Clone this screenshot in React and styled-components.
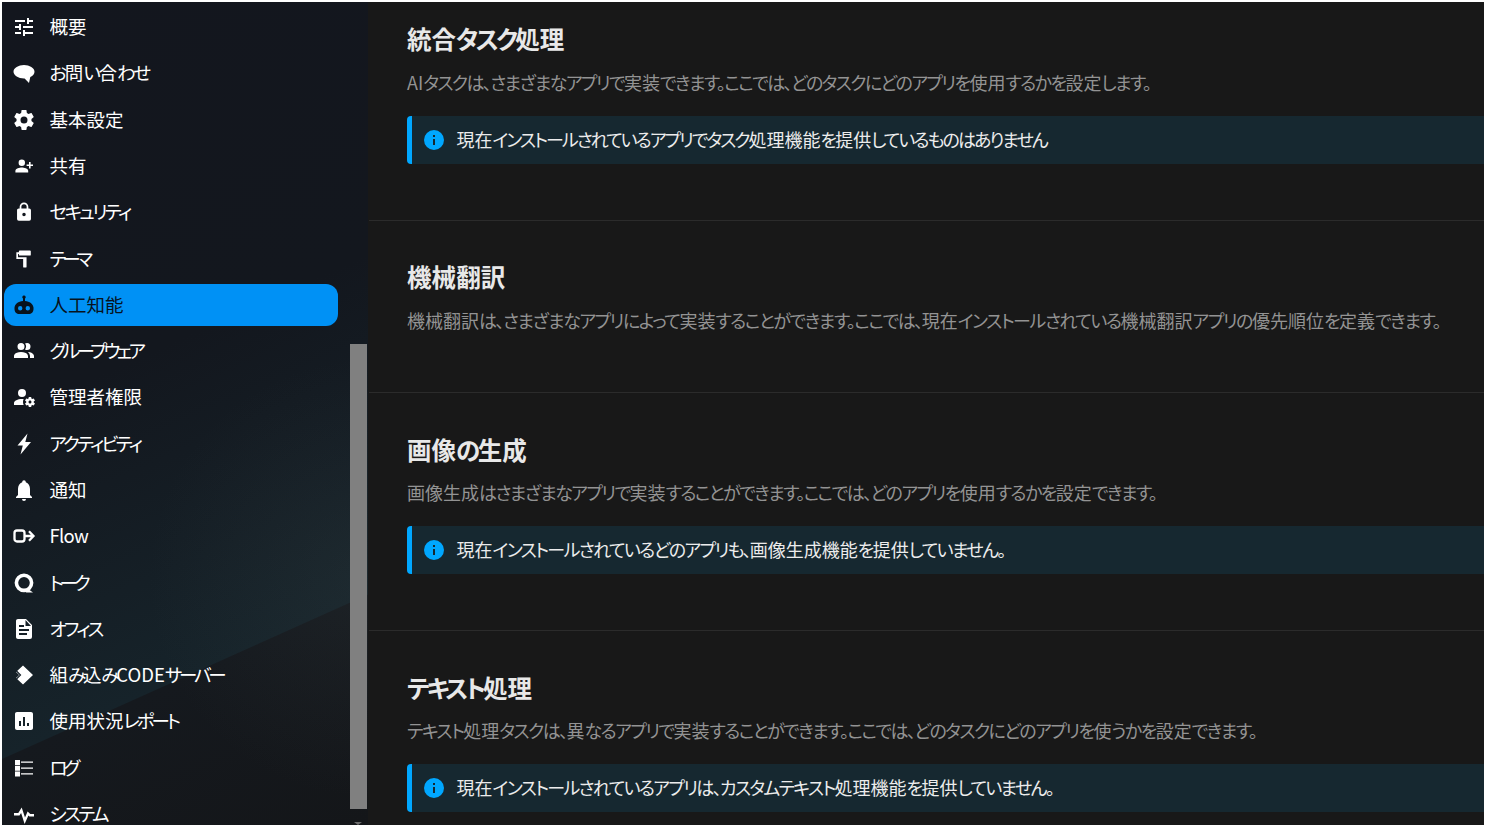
import styled, { createGlobalStyle } from "styled-components";

const GlobalStyle = createGlobalStyle`
  html, body {
    margin: 0;
    height: 100%;
    background: #fff;
    overflow: hidden;
  }
  body {
    font-family: "Noto Sans CJK JP", "Noto Sans", sans-serif;
    font-feature-settings: "palt";
  }
`;

const Frame = styled.div`
  display: flex;
  height: 100vh;
  box-sizing: border-box;
  padding: 2px;
  overflow: hidden;
`;

const Sidebar = styled.aside`
  position: relative;
  flex: 0 0 366px;
  overflow: hidden;
  background:
    radial-gradient(circle at 100% 70%, rgba(70, 80, 80, 0.16), transparent 220px),
    linear-gradient(
      155.8deg,
      #13161e 0,
      #13171e 380px,
      #16232a 690px,
      #15191e 691px,
      #141619 900px
    );
`;

const NavList = styled.ul`
  list-style: none;
  margin: 0;
  padding: 4px 0 0 2px;
  width: 334px;
`;

const NavItem = styled.li`
  display: flex;
  align-items: center;
  gap: 13.5px;
  box-sizing: border-box;
  height: 42.29px;
  margin-bottom: 4px;
  padding-left: 8px;
  border-radius: 12px;
  font-size: 18.5px;
  white-space: nowrap;
  color: ${(p) => (p.$active ? "#07131d" : "#fff")};
  background: ${(p) => (p.$active ? "#0091f5" : "transparent")};
`;

const Label = styled.span`
  margin-top: -2px;
`;

const Tight = styled.span`
  letter-spacing: ${(p) => p.$spacing}px;
`;

const Icon = styled.svg`
  flex: none;
  width: 24px;
  height: 24px;
  fill: currentColor;
`;

const ScrollThumb = styled.div`
  position: absolute;
  top: 342px;
  left: 348px;
  width: 17px;
  height: 465px;
  background: #808080;
`;

const ScrollArrow = styled.div`
  position: absolute;
  bottom: 0;
  left: 352px;
  width: 0;
  height: 0;
  border-left: 4px solid transparent;
  border-right: 4px solid transparent;
  border-top: 3px solid #6d6d6d;
`;

const Main = styled.main`
  flex: 1;
  min-width: 0;
  overflow: hidden;
  background: #181818;
`;

const Section = styled.section`
  padding: ${(p) => (p.$first ? "22px" : "41.5px")} 0 56px 38px;
  margin-left: 1px;
  border-bottom: 1px solid #2b2b2b;
`;

const Heading = styled.h2`
  margin: 0;
  font-size: 24.5px;
  line-height: 30px;
  font-weight: 700;
  color: #e8e8e8;
`;

const Description = styled.p`
  margin: 15.5px 0 4.5px;
  font-size: 18px;
  line-height: 24px;
  white-space: nowrap;
  color: #939393;
`;

const Note = styled.div`
  display: flex;
  align-items: center;
  gap: 10.5px;
  box-sizing: border-box;
  height: 48px;
  margin-top: 22px;
  padding-left: 10px;
  border-left: 5px solid #00a7ff;
  border-radius: 4px 0 0 4px;
  background: #162830;
  font-size: 18px;
  white-space: nowrap;
  color: #ececec;
`;

const InfoIcon = styled(Icon)`
  color: #00a7ff;
`;

// the kana in the reference's font are narrow and the kanji are full width,
// so only the kana runs get tightened; squeeze is the average per character
const KANA = /([\u3040-\u30ff、。]+)/;

const Squeezed = ({ text, squeeze = 0 }) => {
  const parts = text.split(KANA);
  const kanaCount = parts.filter((part) => KANA.test(part)).join("").length;
  if (kanaCount === 0) return <Tight $spacing={squeeze}>{text}</Tight>;
  const spacing = (squeeze * text.length) / kanaCount;
  return parts.map((part, index) =>
    KANA.test(part) ? <Tight key={index} $spacing={spacing}>{part}</Tight> : part
  );
};

const icons = {
  tune: <path d="M3,17V19H9V17H3M3,5V7H13V5H3M13,21V19H21V17H13V15H11V21H13M7,9V11H3V13H7V15H9V9H7M21,13V11H11V13H21M15,9H17V7H21V5H17V3H15V9Z" />,
  chat: <path d="M12 4C6.500 4 1.500 7 1.500 10.700c0 3.700 5 6.700 10.500 6.700h.6L17 22l1.300-6.100c2.700-1.200 4.200-3.100 4.200-5.200C22.500 7 17.500 4 12 4z" />,
  cog: <path d="M12,15.500A3.500,3.500 0 0,1 8.500,12A3.500,3.500 0 0,1 12,8.500A3.500,3.500 0 0,1 15.500,12A3.500,3.500 0 0,1 12,15.500M19.430,12.970C19.470,12.650 19.500,12.330 19.500,12C19.500,11.670 19.470,11.340 19.430,11L21.540,9.370C21.730,9.220 21.780,8.950 21.660,8.730L19.660,5.270C19.540,5.050 19.270,4.960 19.050,5.050L16.560,6.050C16.040,5.660 15.500,5.320 14.870,5.070L14.500,2.420C14.460,2.180 14.250,2 14,2H10C9.750,2 9.540,2.180 9.500,2.420L9.130,5.070C8.500,5.320 7.960,5.660 7.440,6.050L4.950,5.050C4.730,4.960 4.460,5.050 4.340,5.270L2.340,8.730C2.210,8.950 2.270,9.220 2.460,9.370L4.570,11C4.530,11.340 4.500,11.670 4.500,12C4.500,12.330 4.530,12.650 4.570,12.970L2.460,14.630C2.270,14.780 2.210,15.050 2.340,15.270L4.340,18.730C4.460,18.950 4.730,19.030 4.950,18.950L7.440,17.940C7.960,18.340 8.500,18.680 9.130,18.930L9.500,21.580C9.540,21.820 9.750,22 10,22H14C14.250,22 14.460,21.820 14.500,21.580L14.870,18.930C15.500,18.670 16.040,18.340 16.560,17.940L19.050,18.950C19.270,19.030 19.540,18.950 19.660,18.730L21.660,15.270C21.780,15.050 21.730,14.780 21.540,14.630L19.430,12.970Z" />,
  share: <path transform="matrix(-0.8 0 0 0.8 21.800 2.400)" d="M15,14C12.330,14 7,15.330 7,18V20H23V18C23,15.330 17.670,14 15,14M6,10V7H4V10H1V12H4V15H6V12H9V10M15,12A4,4 0 0,0 19,8A4,4 0 0,0 15,4A4,4 0 0,0 11,8A4,4 0 0,0 15,12Z" />,
  lock: <path transform="matrix(0.87 0 0 0.87 1.560 1.560)" d="M12,17A2,2 0 0,0 14,15C14,13.890 13.100,13 12,13A2,2 0 0,0 10,15A2,2 0 0,0 12,17M18,8A2,2 0 0,1 20,10V20A2,2 0 0,1 18,22H6A2,2 0 0,1 4,20V10C4,8.890 4.900,8 6,8H7V6A5,5 0 0,1 12,1A5,5 0 0,1 17,6V8H18M12,3A3,3 0 0,0 9,6V8H15V6A3,3 0 0,0 12,3Z" />,
  paint: <path transform="matrix(-0.85 0 0 0.85 22.200 1.800)" d="M18,4V3A1,1 0 0,0 17,2H5A1,1 0 0,0 4,3V7A1,1 0 0,0 5,8H17A1,1 0 0,0 18,7V6H19V10H9V21A1,1 0 0,0 10,22H12A1,1 0 0,0 13,21V12H21V4H18Z" />,
  robot: <path fillRule="evenodd" d="M12 2.500a1.700 1.700 0 0 1 1 3.100V8c4.800.4 8 3 8.500 6.500v1.500c0 3-2 5-5 5h-9c-3 0-5-2-5-5v-1.500C3 11 6.200 8.400 11 8V5.600a1.700 1.700 0 0 1 1-3.100zM8.200 13a2.200 2.200 0 1 0 0 4.400 2.200 2.200 0 0 0 0-4.400zm7.600 0a2.200 2.200 0 1 0 0 4.400 2.200 2.200 0 0 0 0-4.400z" />,
  group: <path d="M16 17V19H2V17S2 13 9 13 16 17 16 17M12.500 7.500A3.500 3.500 0 1 0 9 11A3.500 3.500 0 0 0 12.500 7.500M15.940 13A5.320 5.320 0 0 1 18 17V19H22V17S22 13.370 15.940 13M15 4A3.390 3.390 0 0 0 13.070 4.590A5 5 0 0 1 13.070 10.410A3.390 3.390 0 0 0 15 11A3.500 3.500 0 0 0 15 4Z" />,
  admin: <path d="M10 4A4 4 0 0 0 6 8A4 4 0 0 0 10 12A4 4 0 0 0 14 8A4 4 0 0 0 10 4M17 12C16.870 12 16.760 12.090 16.740 12.210L16.550 13.530C16.250 13.660 15.960 13.820 15.700 14L14.460 13.500C14.350 13.500 14.220 13.500 14.150 13.630L13.150 15.360C13.090 15.470 13.110 15.600 13.210 15.680L14.270 16.500C14.250 16.670 14.240 16.830 14.240 17C14.240 17.170 14.250 17.330 14.270 17.500L13.210 18.320C13.120 18.400 13.090 18.530 13.150 18.640L14.150 20.370C14.210 20.500 14.340 20.500 14.460 20.500L15.700 20C15.960 20.180 16.240 20.350 16.550 20.470L16.740 21.790C16.760 21.910 16.860 22 17 22H19C19.110 22 19.220 21.910 19.240 21.790L19.430 20.470C19.730 20.340 20 20.180 20.270 20L21.500 20.500C21.630 20.500 21.760 20.500 21.830 20.370L22.830 18.640C22.890 18.530 22.860 18.400 22.770 18.320L21.700 17.500C21.720 17.330 21.740 17.170 21.740 17C21.740 16.830 21.730 16.670 21.700 16.500L22.760 15.680C22.850 15.600 22.880 15.470 22.820 15.360L21.820 13.630C21.760 13.500 21.630 13.500 21.500 13.500L20.270 14C20 13.820 19.730 13.650 19.420 13.530L19.230 12.210C19.220 12.090 19.110 12 19 12H17M10 14C5.580 14 2 15.790 2 18V20H11.680A7 7 0 0 1 11 17A7 7 0 0 1 11.640 14.090C11.110 14.030 10.560 14 10 14M18 15.500C18.830 15.500 19.500 16.170 19.500 17C19.500 17.830 18.830 18.500 18 18.500C17.160 18.500 16.500 17.830 16.500 17C16.500 16.170 17.170 15.500 18 15.500Z" />,
  bolt: <path d="M15.500 1.500L5.500 13.500h5.300L8.500 22.500 19 10h-5.700z" />,
  bell: <path d="M20,19V20H4V19L6,17V11C6,7.900 7.600,5.170 10.200,4.290C10.200,4.190 10.200,4.100 10.200,4A1.800,1.800 0 0,1 12,2.200A1.800,1.800 0 0,1 13.800,4C13.800,4.100 13.800,4.190 13.800,4.290C16.400,5.170 18,7.900 18,11V17L20,19M14,21A2,2 0 0,1 12,23A2,2 0 0,1 10,21" />,
  flow: (
    <>
      <rect x="2.500" y="6.500" width="10" height="11" rx="2.500" fill="none" stroke="currentColor" strokeWidth="2.300" />
      <path d="M12.500 12h9M17 7.300l4.500 4.700-4.500 4.700" fill="none" stroke="currentColor" strokeWidth="2.300" />
    </>
  ),
  talk: (
    <>
      <circle cx="12" cy="11.800" r="7.600" fill="none" stroke="currentColor" strokeWidth="3.600" />
      <path d="M15.500 17.500l5.500 4h-7z" />
    </>
  ),
  office: <path d="M13.500,3V9H19M6,2H14L20,8V20A2,2 0 0,1 18,22H6C4.890,22 4,21.100 4,20V4C4,2.890 4.890,2 6,2M15,18V16H7V18H15M17,14V12H7V14H17M12,10V8H7V10H12Z" />,
  code: (
    <>
      <path d="M11 2.500l10 9.500-10 9.500L4 15l3.200-3L4 9z" />
      <path d="M4 7.500L8.500 12 4 16.500" fill="none" stroke="#15212a" strokeWidth="1.200" />
    </>
  ),
  usage: <path d="M19,3H5C3.900,3 3,3.900 3,5V19C3,20.100 3.900,21 5,21H19C20.100,21 21,20.100 21,19V5C21,3.900 20.100,3 19,3M9,17H7V12H9V17M13,17H11V8H13V17M17,17H15V14H17V17Z" />,
  logs: <path d="M3 4h5v5H3zM3 9.700h5v5H3zM3 15.400h5v5H3zM9 5.500h12v1.200H9zM9 11.500h12v1.200H9zM9 17.300h12v1.200H9z" />,
  pulse: <path d="M2,11H6.300L9.700,5.500L13,15.500L15.600,9.500L18.300,12H22V14.400H17.400L16.400,13.500L12.600,22L9.100,11L7.500,13.400H2V11Z" />,
};

const navItems = [
  { icon: "tune", label: "概要" },
  { icon: "chat", label: "お問い合わせ", squeeze: -1.6 },
  { icon: "cog", label: "基本設定" },
  { icon: "share", label: "共有" },
  { icon: "lock", label: "セキュリティ", squeeze: -2.6 },
  { icon: "paint", label: "テーマ", squeeze: -4 },
  { icon: "robot", label: "人工知能", active: true },
  { icon: "group", label: "グループウェア", squeeze: -3.5 },
  { icon: "admin", label: "管理者権限" },
  { icon: "bolt", label: "アクティビティ", squeeze: -2.7 },
  { icon: "bell", label: "通知" },
  { icon: "flow", label: "Flow", squeeze: -0.7 },
  { icon: "talk", label: "トーク", squeeze: -4 },
  { icon: "office", label: "オフィス", squeeze: -2.7 },
  { icon: "code", label: "組み込みCODEサーバー", squeeze: -1.6 },
  { icon: "usage", label: "使用状況レポート", squeeze: -1.5 },
  { icon: "logs", label: "ログ", squeeze: -4 },
  { icon: "pulse", label: "システム", squeeze: -2.5 },
];

const sections = [
  {
    title: "統合タスク処理",
    titleSqueeze: -1.15,
    text: "AIタスクは、さまざまなアプリで実装できます。ここでは、どのタスクにどのアプリを使用するかを設定します。",
    textSqueeze: -1.38,
    note: "現在インストールされているアプリでタスク処理機能を提供しているものはありません",
    noteSqueeze: -1.59,
  },
  {
    title: "機械翻訳",
    titleSqueeze: 0.1,
    text: "機械翻訳は、さまざまなアプリによって実装することができます。ここでは、現在インストールされている機械翻訳アプリの優先順位を定義できます。",
    textSqueeze: -1.1,
  },
  {
    title: "画像の生成",
    titleSqueeze: -0.5,
    text: "画像生成はさまざまなアプリで実装することができます。ここでは、どのアプリを使用するかを設定できます。",
    textSqueeze: -1.27,
    note: "現在インストールされているどのアプリも、画像生成機能を提供していません。",
    noteSqueeze: -1.19,
  },
  {
    title: "テキスト処理",
    titleSqueeze: -2,
    text: "テキスト処理タスクは、異なるアプリで実装することができます。ここでは、どのタスクにどのアプリを使うかを設定できます。",
    textSqueeze: -1.37,
    note: "現在インストールされているアプリは、カスタムテキスト処理機能を提供していません。",
    noteSqueeze: -1.35,
  },
];

const App = () => (
  <>
    <GlobalStyle />
    <Frame>
      <Sidebar>
        <NavList>
          {navItems.map((item) => (
            <NavItem key={item.label} $active={item.active}>
              <Icon viewBox="0 0 24 24">{icons[item.icon]}</Icon>
              <Label>
                <Squeezed text={item.label} squeeze={item.squeeze} />
              </Label>
            </NavItem>
          ))}
        </NavList>
        <ScrollThumb />
        <ScrollArrow />
      </Sidebar>
      <Main>
        {sections.map((section, index) => (
          <Section key={section.title} $first={index === 0}>
            <Heading>
              <Squeezed text={section.title} squeeze={section.titleSqueeze} />
            </Heading>
            <Description>
              <Squeezed text={section.text} squeeze={section.textSqueeze} />
            </Description>
            {section.note && (
              <Note>
                <InfoIcon viewBox="0 0 24 24">
                  <path d="M13,9H11V7H13M13,17H11V11H13M12,2A10,10 0 0,0 2,12A10,10 0 0,0 12,22A10,10 0 0,0 22,12A10,10 0 0,0 12,2Z" />
                </InfoIcon>
                <Label>
                  <Squeezed text={section.note} squeeze={section.noteSqueeze} />
                </Label>
              </Note>
            )}
          </Section>
        ))}
      </Main>
    </Frame>
  </>
);

export default App;
